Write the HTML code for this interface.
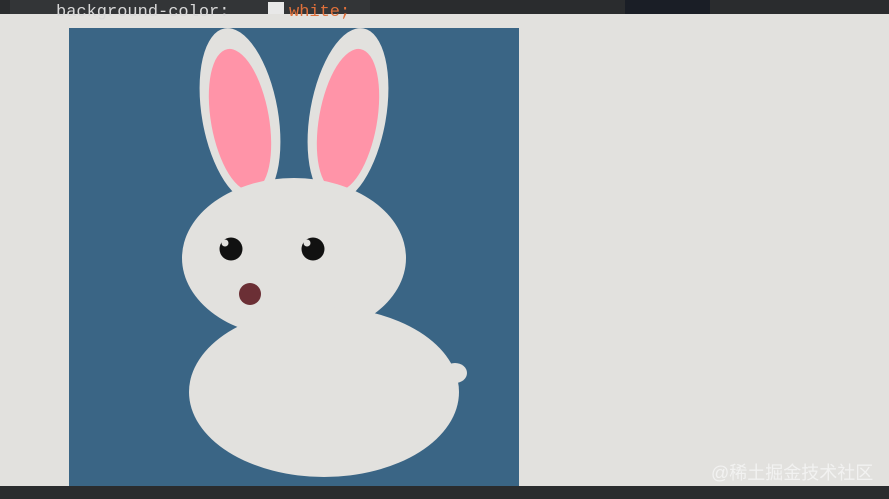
<!DOCTYPE html><html><head><style>body{margin:0;width:889px;height:499px;overflow:hidden;background:#e2e1de;font-family:"Liberation Mono",monospace}</style></head><body>
<svg width="889" height="499" style="position:absolute;left:0;top:0">
<rect x="0" y="0" width="889" height="14" fill="#2a2c2e"/>
<rect x="10" y="0" width="360" height="14" fill="#333537"/>
<rect x="625" y="0" width="85" height="14" fill="#1a1e26"/>
<text x="56" y="16" fill="#d8d8d8" font-size="17" font-family="Liberation Mono,monospace">background-color:</text>
<rect x="268" y="2" width="16" height="12" fill="#e8e8e8"/>
<text x="289" y="16" fill="#e0703a" font-size="17" font-family="Liberation Mono,monospace">white;</text>
<rect x="0" y="486" width="889" height="13" fill="#2a2c2e"/>
<rect x="69" y="28" width="450" height="458" fill="#3a6585"/>
<ellipse cx="240" cy="115" rx="38" ry="88" transform="rotate(-10 240 115)" fill="#e2e1de"/>
<ellipse cx="240" cy="120" rx="29" ry="72" transform="rotate(-10 240 120)" fill="#ff94a8"/>
<ellipse cx="348" cy="115" rx="38" ry="88" transform="rotate(10 348 115)" fill="#e2e1de"/>
<ellipse cx="348" cy="120" rx="29" ry="72" transform="rotate(10 348 120)" fill="#ff94a8"/>
<ellipse cx="294" cy="258" rx="112" ry="80" fill="#e2e1de"/>
<ellipse cx="455" cy="373" rx="12" ry="10" fill="#e2e1de"/>
<ellipse cx="324" cy="392" rx="135" ry="85" fill="#e2e1de"/>
<circle cx="231" cy="249" r="11.5" fill="#111"/><circle cx="225" cy="243" r="3.5" fill="#e2e1de"/>
<circle cx="313" cy="249" r="11.5" fill="#111"/><circle cx="307" cy="243" r="3.5" fill="#e2e1de"/>
<circle cx="250" cy="294" r="11" fill="#6b2f35"/>
<text x="711" y="479" fill="#f4f4f4" fill-opacity="0.85" font-size="18" font-family="Liberation Sans,Noto Sans CJK SC,sans-serif">@稀土掘金技术社区</text>
</svg></body></html>
